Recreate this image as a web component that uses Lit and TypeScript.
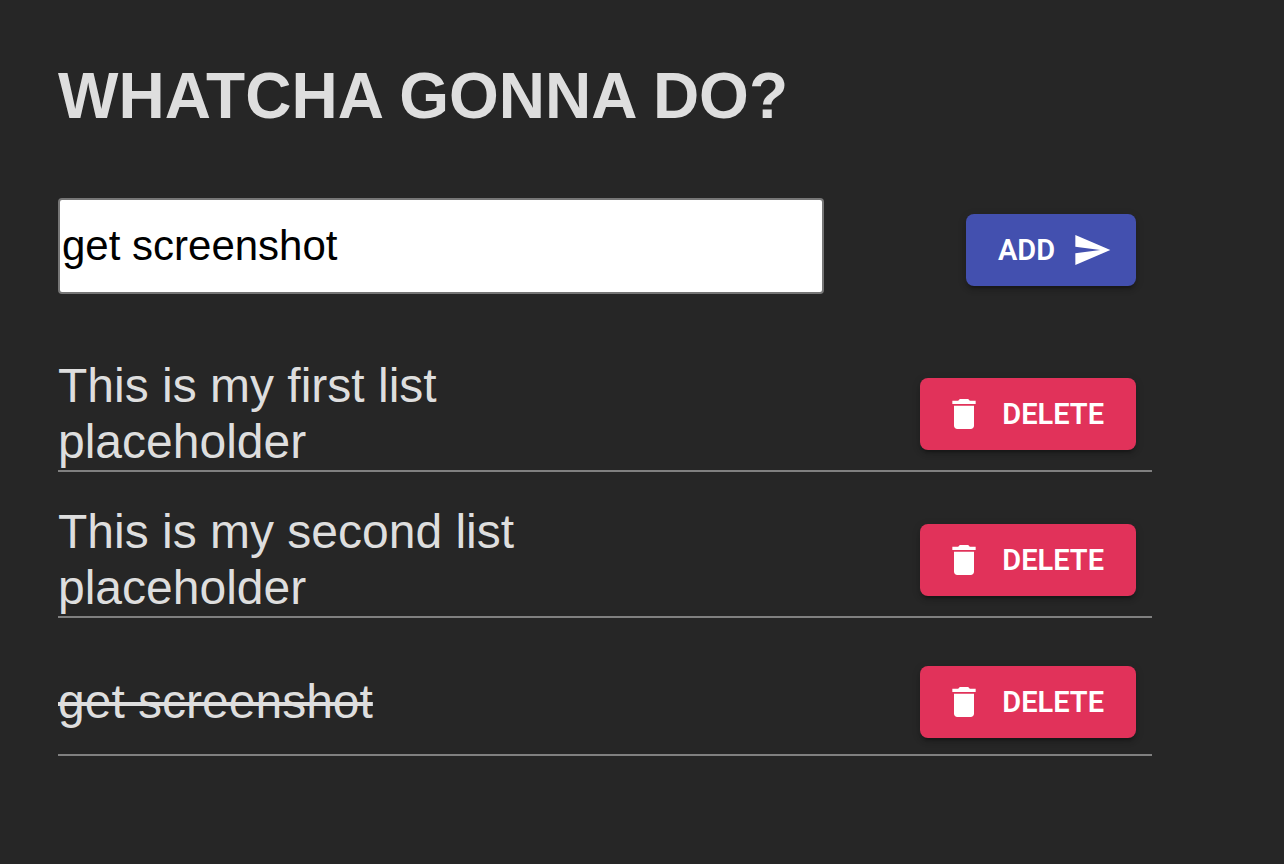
import { LitElement, html, css, svg } from "lit";
import { customElement, property, state } from "lit/decorators.js";
import { classMap } from "lit/directives/class-map.js";

interface Todo {
  text: string;
  done: boolean;
}

const sendIcon = svg`<path d="M2.01 21L23 12 2.01 3 2 10l15 2-15 2z"/>`;
const deleteIcon = svg`<path d="M6 19c0 1.1.9 2 2 2h8c1.1 0 2-.9 2-2V7H6v12zM19 4h-3.5l-1-1h-5l-1 1H5v2h14V4z"/>`;

@customElement("action-button")
class ActionButton extends LitElement {
  @property() kind: "add" | "delete" = "add";

  static styles = css`
    :host {
      display: block;
      flex: none;
      margin: 16px;
    }
    .button {
      display: flex;
      align-items: center;
      justify-content: space-between;
      gap: 16px;
      height: 72px;
      padding: 0 32px;
      border: 0;
      border-radius: 8px;
      color: #fff;
      font: 600 29px/48px Roboto, "Liberation Sans", sans-serif;
      text-transform: uppercase;
      cursor: pointer;
      box-shadow:
        0 6px 2px -4px rgba(0, 0, 0, 0.2),
        0 4px 4px 0 rgba(0, 0, 0, 0.14),
        0 2px 10px 0 rgba(0, 0, 0, 0.12);
    }
    .add {
      min-width: 170px;
      background: #4350af;
      padding-right: 24px;
    }
    .delete {
      min-width: 216px;
      background: #e1325a;
      padding-left: 24px;
    }
    .icon {
      display: block;
      width: 40px;
      height: 40px;
      fill: currentColor;
    }
  `;

  render() {
    const add = this.kind === "add";
    const icon = html`<svg class="icon" viewBox="0 0 24 24" aria-hidden="true">${add ? sendIcon : deleteIcon}</svg>`;
    return html`<button type="button" class="button ${this.kind}">${add
      ? html`<span>Add</span>${icon}`
      : html`${icon}<span>Delete</span>`}</button>`;
  }
}

@customElement("app-root")
class AppRoot extends LitElement {
  @state() draft = "get screenshot";
  @state() todos: Todo[] = [
    { text: "This is my first list placeholder", done: false },
    { text: "This is my second list placeholder", done: false },
    { text: "get screenshot", done: true },
  ];

  static styles = css`
    :host {
      display: block;
      box-sizing: border-box;
      min-height: 100vh;
      padding: 58px 132px 58px 58px;
      background: #262626;
      color: #dedede;
      font-family: "Liberation Sans", Arial, sans-serif;
    }
    .title {
      margin: 0 0 64px;
      font-size: 64px;
      line-height: 76px;
      font-weight: 700;
      text-transform: uppercase;
    }
    .entry {
      display: flex;
      align-items: flex-start;
      justify-content: space-between;
      margin-bottom: 56px;
    }
    .field {
      box-sizing: border-box;
      width: 70%;
      height: 96px;
      padding: 2px;
      border: 2px solid #767676;
      border-radius: 4px;
      background: #fff;
      color: #000;
      font-family: inherit;
      font-size: 42px;
    }
    .list {
      margin: 0;
      padding: 0;
      list-style: none;
    }
    .item {
      display: flex;
      align-items: center;
      justify-content: space-between;
      margin-bottom: 32px;
      border-bottom: 2px solid #808080;
    }
    .text {
      width: 50%;
      font-size: 48px;
      line-height: 56px;
      cursor: pointer;
    }
    .done {
      text-decoration: line-through 4px;
    }
  `;

  private add() {
    if (!this.draft.trim()) return;
    this.todos = [...this.todos, { text: this.draft, done: false }];
  }

  private toggle(index: number) {
    this.todos = this.todos.map((t, i) => (i === index ? { ...t, done: !t.done } : t));
  }

  private remove(index: number) {
    this.todos = this.todos.filter((_, i) => i !== index);
  }

  render() {
    return html`
      <h1 class="title">Whatcha gonna do?</h1>
      <div class="entry">
        <input
          class="field"
          type="text"
          aria-label="New task"
          .value=${this.draft}
          @input=${(e: Event) => (this.draft = (e.target as HTMLInputElement).value)}
        />
        <action-button kind="add" @click=${this.add}></action-button>
      </div>
      <ul class="list">
        ${this.todos.map(
          (todo, i) => html`
            <li class="item">
              <div class=${classMap({ text: true, done: todo.done })} @click=${() => this.toggle(i)}>${todo.text}</div>
              <action-button kind="delete" @click=${() => this.remove(i)}></action-button>
            </li>
          `,
        )}
      </ul>
    `;
  }
}
